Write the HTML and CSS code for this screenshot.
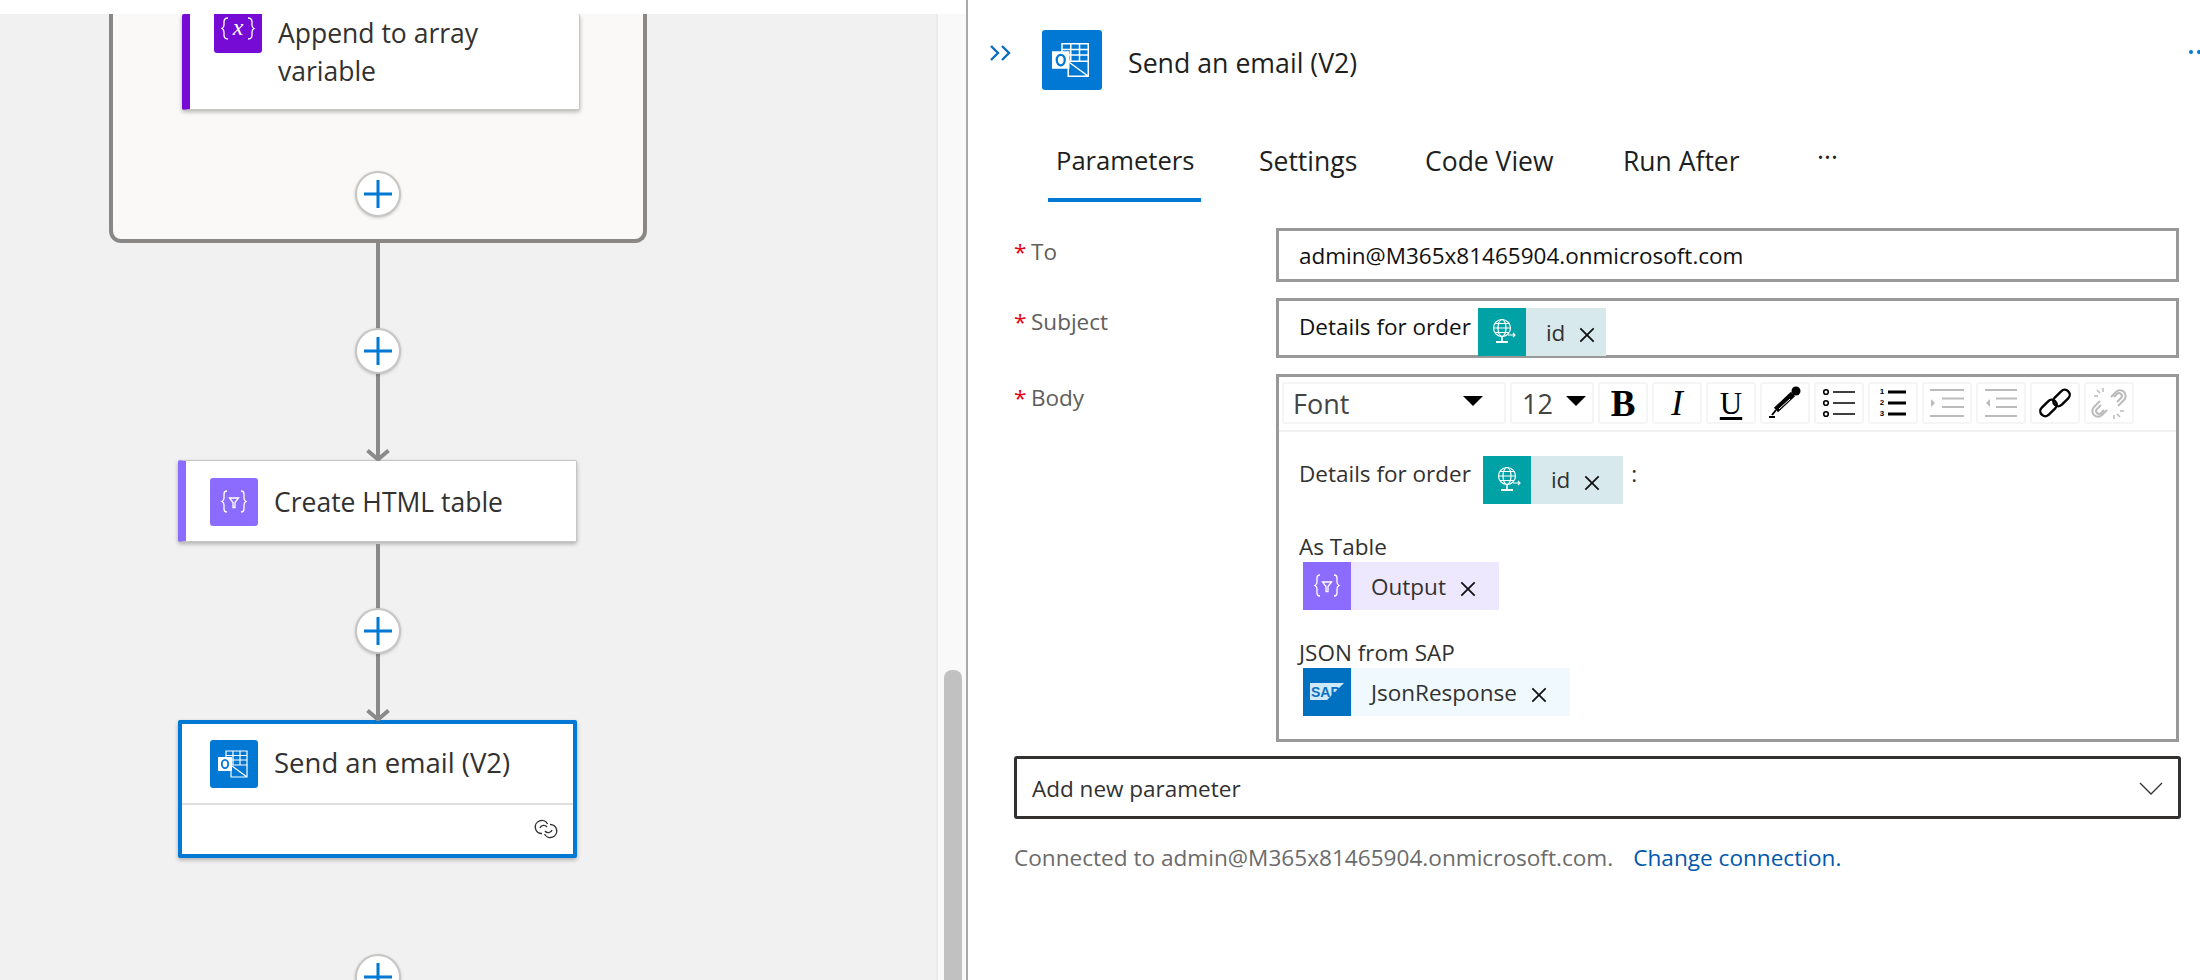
FILE: index.html
```html
<!DOCTYPE html>
<html>
<head>
  <meta charset="UTF-8" />
  <title>Send an email (V2)</title>
  <link rel="stylesheet" href="styles.css">
</head>
<body>

  <!-- shared icons -->
  <svg class="icon-defs" width="0" height="0">
    <defs>
      <symbol id="ic-outlook" viewBox="0 0 48 48">
        <g fill="none" stroke="#fff" stroke-width="1.2">
          <path d="M16 11h21v14H16zM23 11v14M30 11v14M16 15.5h21M16 20h21" />
          <path d="M21 25v12h16V25M22 26l15 11" />
        </g>
        <rect x="8" y="17" width="14" height="14" fill="#fff" />
        <ellipse cx="15" cy="24" rx="3.2" ry="4.2" fill="none" stroke="#0078d4" stroke-width="1.8" />
      </symbol>
      <symbol id="ic-funnel" viewBox="0 0 48 48">
        <g fill="none" stroke="#fff" stroke-width="1.3">
          <path d="M17 13c-2 0-3 1-3 3v4c0 2-1 3-2 3.500 1 .5 2 1.500 2 3.500v4c0 2 1 3 3 3" />
          <path d="M31 13c2 0 3 1 3 3v4c0 2 1 3 2 3.500-1 .5-2 1.500-2 3.500v4c0 2-1 3-3 3" />
          <path d="M19.500 20h9l-3.500 4.500v5h-2v-5z" />
        </g>
      </symbol>
      <symbol id="ic-globe" viewBox="0 0 48 48">
        <g fill="none" stroke="#fff" stroke-width="1.2">
          <circle cx="24" cy="20" r="8.500" />
          <ellipse cx="24" cy="20" rx="4" ry="8.500" />
          <path d="M15.500 20h17M17 15.500h14M17 24.500h14M30 27h7M35 25l2 2-2 2" />
        </g>
        <path d="M23.200 29h1.600v4h-1.600zM18 33h12v2H18z" fill="#fff" />
      </symbol>
      <symbol id="ic-close" viewBox="0 0 18 18">
        <path d="M1.500 1.500l15 15M16.500 1.500l-15 15" fill="none" stroke="#111" stroke-width="2" />
      </symbol>
    </defs>
  </svg>

  <div class="page">

    <!-- Flow canvas -->
    <section class="designer">
      <div class="canvas">
        <div class="flow">
          <div class="scope">
            <div class="card card-append">
              <div class="node-icon node-icon-clipped">
                <svg viewBox="0 0 48 48" width="48" height="48">
                  <g fill="none" stroke="#fff" stroke-width="1.3">
                    <path d="M14 13c-3 0-4 1-4 4v3c0 2-1 3-2 3.500 1 .5 2 1.500 2 3.500v3c0 3 1 4 4 4" />
                    <path d="M34 13c3 0 4 1 4 4v3c0 2 1 3 2 3.500-1 .5-2 1.500-2 3.500v3c0 3-1 4-4 4" />
                  </g>
                  <text x="24" y="30" text-anchor="middle" class="icon-x">x</text>
                </svg>
              </div>
              <div class="card-title card-title-wrap">Append to array variable</div>
            </div>
            <button class="add-btn add-btn-scope"><svg width="28" height="28"><path d="M14 0v28M0 14h28" /></svg></button>
          </div>

          <div class="connector connector-a">
            <button class="add-btn"><svg width="28" height="28"><path d="M14 0v28M0 14h28" /></svg></button>
            <svg class="arrow" width="24" height="12"><path d="M1.500 1.500L12 10.500 22.500 1.500" /></svg>
          </div>

          <div class="card card-table">
            <div class="node-icon node-icon-table"><svg width="48" height="48"><use href="#ic-funnel" /></svg></div>
            <div class="card-title">Create HTML table</div>
          </div>

          <div class="connector connector-b">
            <button class="add-btn"><svg width="28" height="28"><path d="M14 0v28M0 14h28" /></svg></button>
            <svg class="arrow" width="24" height="12"><path d="M1.500 1.500L12 10.500 22.500 1.500" /></svg>
          </div>

          <div class="card card-selected">
            <div class="card-main">
              <div class="node-icon node-icon-outlook"><svg width="48" height="48"><use href="#ic-outlook" /></svg></div>
              <div class="card-title">Send an email (V2)</div>
            </div>
            <div class="card-foot">
              <svg width="26" height="20" viewBox="0 0 26 20" fill="none" stroke="#323130" stroke-width="1.400">
                <path d="M9 14.500a6.500 6.500 0 1 1 5.500-9.500" />
                <path d="M7 9a4 4 0 0 1 7-1" />
                <path d="M17 5.500a6.500 6.500 0 1 1-5.500 9.500" />
                <path d="M19 11a4 4 0 0 1-7 1" />
              </svg>
            </div>
          </div>

          <button class="add-btn add-btn-end"><svg width="28" height="28"><path d="M14 0v28M0 14h28" /></svg></button>
        </div>
      </div>
      <div class="scroll-track"><div class="scroll-thumb"></div></div>
    </section>

    <!-- Details panel -->
    <aside class="panel">
      <span class="edge-dots"><i></i><i></i></span>

      <div class="panel-head">
        <svg class="collapse" width="23" height="16" viewBox="0 0 23 16" fill="none" stroke="#0f6cbd" stroke-width="2.400">
          <path d="M2 1l7 7-7 7M13 1l7 7-7 7" />
        </svg>
        <div class="head-icon"><svg width="60" height="60"><use href="#ic-outlook" /></svg></div>
        <div class="head-title">Send an email (V2)</div>
      </div>

      <div class="tabs">
        <div class="tab tab-params tab-active">Parameters</div>
        <div class="tab tab-settings">Settings</div>
        <div class="tab tab-code">Code View</div>
        <div class="tab tab-run">Run After</div>
        <div class="tab tab-more">···</div>
      </div>

      <div class="fields">
        <label class="field-label"><span class="req">*</span>To</label>
        <div class="input input-to">admin@M365x81465904.onmicrosoft.com</div>

        <label class="field-label"><span class="req">*</span>Subject</label>
        <div class="input input-subject">
          <span class="subject-text">Details for order</span>
          <span class="token token-id token-tight">
            <span class="token-icon"><svg width="48" height="48"><use href="#ic-globe" /></svg></span>
            <span class="token-label">id</span>
            <svg class="token-x" width="16" height="16"><use href="#ic-close" /></svg>
          </span>
        </div>

        <label class="field-label"><span class="req">*</span>Body</label>
        <div class="editor">
          <div class="toolbar">
            <div class="tool tool-font">Font<span class="caret"></span></div>
            <div class="tool tool-size">12<span class="caret"></span></div>
            <div class="tool tool-b">B</div>
            <div class="tool tool-i">I</div>
            <div class="tool tool-u">U</div>
            <div class="tool">
              <svg width="50" height="42" fill="none" stroke="#000">
                <path d="M16 28L33 12" stroke-width="6" />
                <circle cx="36" cy="9" r="4.500" fill="#000" stroke="none" />
                <path d="M16 28l-4 5M9 35h6" stroke-width="2" />
                <path d="M19 27l11-10" stroke="#fff" stroke-width="1" />
              </svg>
            </div>
            <div class="tool">
              <svg width="50" height="42" fill="none" stroke="#000" stroke-width="1.600">
                <circle cx="12" cy="10" r="2.300" />
                <circle cx="12" cy="21" r="2.300" />
                <circle cx="12" cy="32" r="2.300" />
                <path d="M19 10h22M19 21h22M19 32h22" />
              </svg>
            </div>
            <div class="tool">
              <svg width="50" height="42" fill="none" stroke="#000" stroke-width="3">
                <path d="M20 10h18M20 21h18M20 32h18" />
                <text x="14" y="12" class="icon-num">1</text>
                <text x="14" y="23" class="icon-num">2</text>
                <text x="14" y="34" class="icon-num">3</text>
              </svg>
            </div>
            <div class="tool">
              <svg width="50" height="42" fill="none" stroke="#bbb" stroke-width="2.200">
                <path d="M8 8h34M20 16.500h22M20 25h22M8 34h34" />
                <path d="M9 17l4 4-4 4z" fill="#bbb" stroke="none" />
              </svg>
            </div>
            <div class="tool">
              <svg width="50" height="42" fill="none" stroke="#bbb" stroke-width="2.200">
                <path d="M9 8h32M20 16.500h21M20 25h21M9 34h32" />
                <path d="M14 17l-4 4 4 4z" fill="#bbb" stroke="none" />
              </svg>
            </div>
            <div class="tool">
              <svg width="50" height="42" fill="none" stroke="#000" stroke-width="2.400">
                <rect x="9" y="21" width="19" height="10" rx="5" transform="rotate(-45 18.500 26)" />
                <rect x="22" y="11" width="19" height="10" rx="5" transform="rotate(-45 31.500 16)" />
              </svg>
            </div>
            <div class="tool">
              <svg width="50" height="42" fill="none" stroke="#bbb" stroke-width="2">
                <path d="M27 15l5-5a5.500 5.500 0 0 1 8 8l-6 6" />
                <path d="M30 15l3-3a2.500 2.500 0 0 1 4 4l-4 4" />
                <path d="M16 19l-6 6a5.500 5.500 0 0 0 8 8l5-5" />
                <path d="M17 23l-4 4a2.500 2.500 0 0 0 4 4l3-3" />
                <path d="M13 8l3 3M10 14h4M19 6v4M36 35l-3-3M40 29h-4M30 37v-4" stroke-width="1.500" />
              </svg>
            </div>
          </div>

          <div class="editor-body">
            <div class="line line-first">
              <span>Details for order</span>
              <span class="token token-id token-gap">
                <span class="token-icon"><svg width="48" height="48"><use href="#ic-globe" /></svg></span>
                <span class="token-label">id</span>
                <svg class="token-x" width="16" height="16"><use href="#ic-close" /></svg>
              </span>
              <span class="colon">:</span>
            </div>
            <div class="line line-label line-table">As Table</div>
            <span class="token token-block token-output">
              <span class="token-icon"><svg width="48" height="48"><use href="#ic-funnel" /></svg></span>
              <span class="token-label">Output</span>
              <svg class="token-x" width="16" height="16"><use href="#ic-close" /></svg>
            </span>
            <div class="line line-label line-json">JSON from SAP</div>
            <span class="token token-block token-sap">
              <span class="token-icon">
                <svg width="48" height="48">
                  <path d="M7 15h34L24 32H7z" fill="#cfe9fa" />
                  <text x="8" y="29" class="icon-sap">SAP</text>
                </svg>
              </span>
              <span class="token-label">JsonResponse</span>
              <svg class="token-x" width="16" height="16"><use href="#ic-close" /></svg>
            </span>
          </div>
        </div>
      </div>

      <div class="add-param">
        <span>Add new parameter</span>
        <svg width="24" height="13" fill="none" stroke="#323130" stroke-width="1.300"><path d="M1 1l11 11L23 1" /></svg>
      </div>

      <p class="connection">Connected to admin@M365x81465904.onmicrosoft.com.<a href="#">Change connection.</a></p>
    </aside>
  </div>

</body>
</html>
```

FILE: styles.css
```css
* {
  box-sizing: border-box;
}

html, body {
  margin: 0;
  height: 100%;
  overflow: hidden;
}

body {
  font-family: "Open Sans", "Noto Sans", Arial, sans-serif;
  background: #fff;
  color: #323130;
}

.icon-defs {
  position: absolute;
}

.page {
  display: flex;
  height: 980px;
}

/* left side: flow canvas */
.designer {
  display: flex;
  width: 968px;
  flex: none;
  padding-top: 14px;
  border-right: 2px solid #a9a9a9;
}

.canvas {
  width: 938px;
  flex: none;
  background: #f1f1f1;
  border-right: 2px solid #ebebeb;
  overflow: hidden;
}

.flow {
  display: flex;
  flex-direction: column;
  align-items: flex-start;
}

.scope {
  position: relative;
  width: 538px;
  height: 229px;
  margin-left: 109px;
  background: #faf9f8;
  border: 4px solid #8a8886;
  border-top: none;
  border-radius: 0 0 12px 12px;
}

.card {
  display: flex;
  background: #fff;
  border: 1px solid #c8c6c4;
  border-radius: 2px;
  box-shadow: 0 2px 4px rgba(0, 0, 0, 0.28);
}

.card-append {
  width: 398px;
  height: 96px;
  margin-left: 69px;
  border-top: none;
  border-left: 8px solid #770bd6;
  overflow: hidden;
}

.card-table {
  width: 399px;
  height: 82px;
  margin-left: 178px;
  padding: 17px 0 0 24px;
  border-left: 8px solid #8c6cff;
}

.card-selected {
  flex-direction: column;
  width: 399px;
  height: 138px;
  margin-left: 178px;
  border: 4px solid #0078d4;
}

.card-main {
  display: flex;
  height: 81px;
  padding: 16px 0 0 28px;
  border-bottom: 2px solid #e1dfdd;
}

.card-foot {
  display: flex;
  justify-content: flex-end;
  padding: 14px 14px 0 0;
}

.node-icon {
  width: 48px;
  height: 48px;
  flex: none;
  border-radius: 3px;
  background: #770bd6;
}

.node-icon-clipped {
  margin: -9px 0 0 24px;
}

.node-icon-table {
  background: #8c6cff;
}

.node-icon-outlook {
  background: #0078d4;
}

.icon-x {
  font: italic 24px "Liberation Serif", serif;
  fill: #fff;
}

.icon-num {
  font: bold 8px "Liberation Sans", sans-serif;
  fill: #000;
  stroke: none;
  text-anchor: middle;
}

.icon-sap {
  font: bold 14px "Liberation Sans", sans-serif;
  fill: #0a70c4;
}

.card-title {
  margin-left: 16px;
  font-size: 27px;
  line-height: 46px;
  white-space: nowrap;
}

.card-title-wrap {
  width: 240px;
  font-size: 26.5px;
  line-height: 38px;
  white-space: normal;
}

.card-table .card-title {
  margin-top: 1px;
  font-size: 26.5px;
}

.card-selected .card-title {
  font-size: 27.5px;
}

.connector {
  position: relative;
  width: 4px;
  margin-left: 376px;
  background: #8a8a8a;
}

.connector-a {
  height: 217px;
}

.connector-b {
  height: 176px;
  margin-top: 2px;
}

.arrow {
  position: absolute;
  left: -10px;
  bottom: -1px;
  fill: none;
  stroke: #8a8a8a;
  stroke-width: 4;
}

.add-btn {
  display: flex;
  align-items: center;
  justify-content: center;
  width: 46px;
  height: 46px;
  padding: 0;
  background: #fff;
  border: 2px solid #c8c6c4;
  border-radius: 50%;
  box-shadow: 0 1px 3px rgba(0, 0, 0, 0.2);
}

.add-btn path {
  fill: none;
  stroke: #0078d4;
  stroke-width: 3;
}

.connector .add-btn {
  position: absolute;
  left: -21px;
}

.connector-a .add-btn {
  top: 85px;
}

.connector-b .add-btn {
  top: 64px;
}

.add-btn-scope {
  position: absolute;
  left: 242px;
  top: 157px;
}

.add-btn-end {
  margin: 96px 0 0 355px;
}

.scroll-track {
  position: relative;
  flex: 1;
  background: #f9f9f9;
}

.scroll-thumb {
  position: absolute;
  left: 6px;
  right: 4px;
  top: 656px;
  bottom: 0;
  background: #c1c1c1;
  border-radius: 8px 8px 0 0;
}

/* right side: details panel */
.panel {
  position: relative;
  flex: 1;
  min-width: 0;
}

.edge-dots {
  position: absolute;
  top: 50px;
  left: 1221px;
  display: flex;
  gap: 4px;
}

.edge-dots i {
  width: 4px;
  height: 4px;
  background: #0078d4;
  border-radius: 50%;
}

.panel-head {
  display: flex;
  align-items: flex-start;
  height: 90px;
  padding: 30px 0 0 21px;
}

.collapse {
  margin-top: 15px;
}

.head-icon {
  width: 60px;
  height: 60px;
  margin-left: 30px;
  background: #0078d4;
  border-radius: 3px;
}

.head-title {
  margin-left: 26px;
  padding-top: 11px;
  font-size: 26.7px;
  line-height: 44px;
  color: #201f1e;
}

.tabs {
  display: flex;
  gap: 50px;
  margin: 52px 0 26px 80px;
}

.tab {
  height: 60px;
  padding: 0 8px;
  font-size: 26.5px;
  line-height: 38px;
  color: #201f1e;
  border-bottom: 4px solid transparent;
}

.tab-params {
  width: 153px;
  font-size: 25.6px;
}

.tab-settings {
  width: 116px;
}

.tab-code {
  width: 148px;
}

.tab-run {
  width: 134px;
}

.tab-active {
  border-bottom-color: #0078d4;
}

.tab-more {
  margin: -4px 0 0 10px;
}

.fields {
  display: grid;
  grid-template-columns: 262px 1fr;
  row-gap: 16px;
  margin: 0 21px 0 46px;
}

.field-label {
  padding-top: 8.5px;
  font-size: 22.5px;
  line-height: 30px;
  color: #605e5c;
}

.req {
  display: inline-block;
  width: 17px;
  color: #e60012;
}

.input {
  background: #fff;
  border: 3px solid #999;
  font-size: 22.5px;
  color: #111;
}

.input-to {
  height: 54px;
  padding-left: 20px;
  line-height: 50px;
}

.input-subject {
  display: flex;
  align-items: flex-start;
  height: 60px;
  padding: 7px 0 0 20px;
}

.subject-text {
  margin-right: 7px;
  line-height: 38px;
}

.token {
  display: inline-flex;
  align-items: center;
  height: 48px;
  padding-right: 23px;
  font-size: 22.5px;
  color: #323130;
}

.token-block {
  display: flex;
  width: fit-content;
  margin-left: 4px;
}

.token-icon {
  display: block;
  width: 48px;
  height: 48px;
  flex: none;
}

.token-label {
  margin: 0 14px 0 20px;
}

.token-x {
  margin-top: 6px;
}

.token-id {
  background: #d7e9ed;
}

.token-id .token-icon {
  background: #00a2a5;
}

.token-tight {
  padding-right: 11px;
}

.token-gap {
  margin-left: 12px;
}

.token-output {
  background: #eee8fe;
}

.token-output .token-icon {
  background: #8c6cff;
}

.token-sap {
  background: #eff9fe;
}

.token-sap .token-icon {
  background: #0070c0;
}

.editor {
  border: 3px solid #999;
}

.toolbar {
  display: flex;
  gap: 4px;
  height: 55px;
  padding: 5px 0 0 3px;
  border-bottom: 2px solid #f1f1f1;
}

.tool {
  display: flex;
  align-items: center;
  justify-content: center;
  width: 50px;
  height: 42px;
  background: #fff;
  border: 2px solid #f5f5f5;
  border-radius: 3px;
  color: #000;
}

.tool svg {
  flex: none;
  margin: -2px;
}

.tool-font,
.tool-size {
  justify-content: space-between;
  font-size: 27px;
  color: #444;
}

.tool-font {
  width: 224px;
  padding: 0 21px 0 9px;
}

.tool-size {
  width: 84px;
  padding: 0 6px 0 10px;
}

.caret {
  width: 0;
  height: 0;
  margin-bottom: 4px;
  border-left: 10px solid transparent;
  border-right: 10px solid transparent;
  border-top: 10px solid #000;
}

.tool-b,
.tool-i,
.tool-u {
  font-family: "Liberation Serif", serif;
  line-height: 1;
}

.tool-b {
  font-size: 37px;
  font-weight: bold;
}

.tool-i {
  font-size: 35px;
  font-style: italic;
}

.tool-u {
  font-size: 31px;
  text-decoration: underline;
  text-underline-offset: 3px;
}

.editor-body {
  padding: 24px 0 23px 20px;
  font-size: 22.5px;
}

.line {
  line-height: 30px;
}

.line-first {
  display: flex;
  align-items: flex-start;
  line-height: 36px;
}

.colon {
  margin-left: 8px;
}

.line-table {
  margin-top: 28px;
}

.line-json {
  margin-top: 28px;
}

.add-param {
  display: flex;
  align-items: center;
  justify-content: space-between;
  width: 1167px;
  height: 63px;
  margin: 14px 0 0 46px;
  padding: 2px 15px 0;
  border: 3px solid #323130;
  border-radius: 3px;
  font-size: 22.5px;
}

.connection {
  margin: 24px 0 0 46px;
  font-size: 22.6px;
  line-height: 30px;
  color: #6b6b6b;
}

.connection a {
  margin-left: 20px;
  color: #0058ad;
  text-decoration: none;
}
```
